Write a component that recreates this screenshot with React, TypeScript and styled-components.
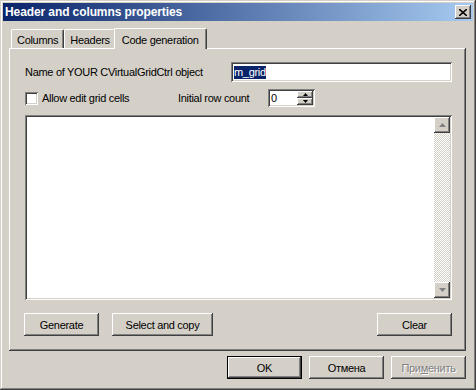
import styled, { createGlobalStyle, css } from "styled-components";

const GlobalStyle = createGlobalStyle`
  html, body {
    margin: 0;
    padding: 0;
    background: #d4d0c8;
  }
  body {
    font-family: "Liberation Sans", Arial, sans-serif;
    font-size: 11px;
    letter-spacing: -0.3px;
    color: #000;
  }
`;

const raised = css`
  box-shadow: inset -1px -1px #404040, inset 1px 1px #fff,
    inset -2px -2px #808080, inset 2px 2px #d4d0c8;
`;

const sunken = css`
  box-shadow: inset 1px 1px #808080, inset -1px -1px #fff,
    inset 2px 2px #404040, inset -2px -2px #d4d0c8;
`;

const Window = styled.div`
  width: 476px;
  height: 390px;
  box-sizing: border-box;
  padding: 3px;
  background: #d4d0c8;
  display: flex;
  flex-direction: column;
  box-shadow: inset -1px -1px #404040, inset 1px 1px #d4d0c8,
    inset -2px -2px #808080, inset 2px 2px #fff;
`;

const TitleBar = styled.div`
  height: 18px;
  display: flex;
  align-items: center;
  justify-content: space-between;
  padding: 0 2px;
  background: linear-gradient(to right, #0a246a, #a6caf0);
`;

const Title = styled.span`
  color: #fff;
  font-weight: bold;
  font-size: 12px;
  letter-spacing: -0.1px;
`;

const CloseButton = styled.div`
  width: 16px;
  height: 14px;
  box-sizing: border-box;
  background: #d4d0c8;
  display: flex;
  align-items: center;
  justify-content: center;
  ${raised}
`;

const Body = styled.div`
  flex: 1;
  display: flex;
  flex-direction: column;
  padding: 7px 7px 0 6px;
`;

const TabStrip = styled.div`
  display: flex;
  align-items: flex-end;
  height: 21px;
  padding-left: 2px;
  position: relative;
  z-index: 1;
`;

const Tab = styled.div<{ $active?: boolean }>`
  box-sizing: border-box;
  height: ${({ $active }) => ($active ? "21px" : "19px")};
  padding: ${({ $active }) => ($active ? "2px 7px 0 7px" : "2px 5px 0 5px")};
  margin: ${({ $active }) => ($active ? "0 -2px 0 -2px" : "0 0 1px 0")};
  display: flex;
  align-items: center;
  background: #d4d0c8;
  border-top: 1px solid #fff;
  border-left: 1px solid #fff;
  border-right: 1px solid #404040;
  border-radius: 2px 2px 0 0;
  box-shadow: inset -1px 0 #808080;
  position: relative;
  z-index: ${({ $active }) => ($active ? 2 : 1)};
`;

const Panel = styled.div`
  height: 303px;
  box-sizing: border-box;
  margin-top: -1px;
  padding: 14px 14px 0 16px;
  display: flex;
  flex-direction: column;
  ${raised}
`;

const Row = styled.div`
  display: flex;
  align-items: center;
`;

const NameRow = styled(Row)`
  height: 20px;
`;

const NameLabel = styled.span`
  flex: 1;
`;

const OptionsRow = styled(Row)`
  height: 18px;
  margin-top: 7px;
`;

const Field = styled.div<{ $width: number; $height: number }>`
  width: ${({ $width }) => $width}px;
  height: ${({ $height }) => $height}px;
  box-sizing: border-box;
  background: #fff;
  padding: 2px 3px;
  display: flex;
  align-items: center;
  ${sunken}
`;

const Selected = styled.span`
  background: #0a246a;
  color: #fff;
  line-height: 13px;
`;

const CheckBox = styled.div`
  width: 13px;
  height: 13px;
  box-sizing: border-box;
  background: #fff;
  ${sunken}
`;

const CheckLabel = styled.span`
  margin-left: 4px;
  width: 136px;
`;

const SpinLabel = styled.span`
  width: 90px;
`;

const SpinField = styled(Field)`
  padding: 2px;
  justify-content: space-between;
`;

const SpinValue = styled.span`
  padding-left: 1px;
`;

const SpinButtons = styled.div`
  display: flex;
  flex-direction: column;
  width: 16px;
  height: 14px;
`;

const SpinButton = styled.div`
  flex: 1;
  background: #d4d0c8;
  display: flex;
  align-items: center;
  justify-content: center;
  ${raised}
`;

const Memo = styled.div`
  height: 185px;
  margin-top: 8px;
  box-sizing: border-box;
  padding: 2px;
  background: #fff;
  display: flex;
  justify-content: flex-end;
  ${sunken}
`;

const ScrollBar = styled.div`
  width: 16px;
  display: flex;
  flex-direction: column;
  background: repeating-conic-gradient(#fff 0 25%, #d4d0c8 0 50%) 0 0 / 2px 2px;
`;

const ScrollTrack = styled.div`
  flex: 1;
`;

const ScrollButton = styled.div`
  height: 16px;
  background: #d4d0c8;
  display: flex;
  align-items: center;
  justify-content: center;
  ${raised}
`;

const ActionRow = styled(Row)`
  margin-top: 13px;
  margin-left: -1px;
  gap: 13px;
`;

const Button = styled.div<{ $width?: number; $default?: boolean; $disabled?: boolean }>`
  width: ${({ $width }) => $width ?? 75}px;
  height: 23px;
  box-sizing: border-box;
  background: #d4d0c8;
  display: flex;
  align-items: center;
  justify-content: center;
  ${({ $default }) =>
    $default
      ? css`
          border: 1px solid #000;
          box-shadow: inset -1px -1px #404040, inset 1px 1px #fff,
            inset -2px -2px #808080, inset 2px 2px #d4d0c8;
        `
      : raised}
  color: ${({ $disabled }) => ($disabled ? "#808080" : "#000")};
  text-shadow: ${({ $disabled }) => ($disabled ? "1px 1px #fff" : "none")};
`;

const Spacer = styled.div`
  flex: 1;
`;

const DialogButtons = styled(Row)`
  justify-content: flex-end;
  gap: 7px;
  margin-top: 5px;
`;

const Arrow = ({ up, color = "#000" }: { up?: boolean; color?: string }) => (
  <svg width="7" height="4" viewBox="0 0 7 4">
    <path d={up ? "M3.5 0 L7 4 L0 4 Z" : "M0 0 L7 0 L3.5 4 Z"} fill={color} />
  </svg>
);

const SmallArrow = ({ up }: { up?: boolean }) => (
  <svg width="5" height="3" viewBox="0 0 5 3">
    <path d={up ? "M2.5 0 L5 3 L0 3 Z" : "M0 0 L5 0 L2.5 3 Z"} fill="#000" />
  </svg>
);

export default function App() {
  return (
    <>
      <GlobalStyle />
      <Window>
        <TitleBar>
          <Title>Header and columns properties</Title>
          <CloseButton>
            <svg width="8" height="7" viewBox="0 0 8 7">
              <path d="M0 0 L8 7 M8 0 L0 7" stroke="#000" strokeWidth="1.6" />
            </svg>
          </CloseButton>
        </TitleBar>
        <Body>
          <TabStrip>
            <Tab>Columns</Tab>
            <Tab>Headers</Tab>
            <Tab $active>Code generation</Tab>
          </TabStrip>
          <Panel>
            <NameRow>
              <NameLabel>Name of YOUR CVirtualGridCtrl object</NameLabel>
              <Field $width={221} $height={20}>
                <Selected>m_grid</Selected>
              </Field>
            </NameRow>
            <OptionsRow>
              <CheckBox />
              <CheckLabel>Allow edit grid cells</CheckLabel>
              <SpinLabel>Initial row count</SpinLabel>
              <SpinField $width={47} $height={18}>
                <SpinValue>0</SpinValue>
                <SpinButtons>
                  <SpinButton>
                    <SmallArrow up />
                  </SpinButton>
                  <SpinButton>
                    <SmallArrow />
                  </SpinButton>
                </SpinButtons>
              </SpinField>
            </OptionsRow>
            <Memo>
              <ScrollBar>
                <ScrollButton>
                  <Arrow up color="#808080" />
                </ScrollButton>
                <ScrollTrack />
                <ScrollButton>
                  <Arrow color="#808080" />
                </ScrollButton>
              </ScrollBar>
            </Memo>
            <ActionRow>
              <Button>Generate</Button>
              <Button $width={101}>Select and copy</Button>
              <Spacer />
              <Button>Clear</Button>
            </ActionRow>
          </Panel>
          <DialogButtons>
            <Button $default>OK</Button>
            <Button>Отмена</Button>
            <Button $disabled>
              При<u>м</u>енить
            </Button>
          </DialogButtons>
        </Body>
      </Window>
    </>
  );
}
